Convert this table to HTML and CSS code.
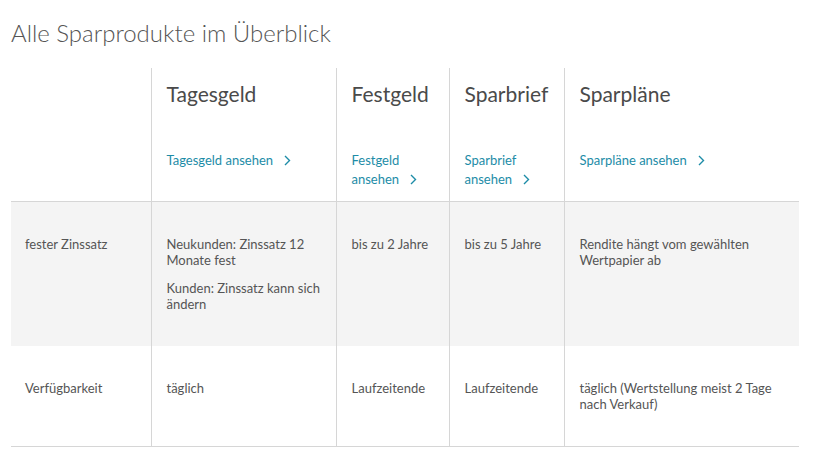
FILE: index.html
```html
<!DOCTYPE html>
<html lang="de">
<head>
<meta charset="utf-8">
<title>Alle Sparprodukte im Überblick</title>
<link rel="stylesheet" href="styles.css">
</head>
<body>
<main class="page">
  <h1 class="title">Alle Sparprodukte im Überblick</h1>
  <table class="compare">
    <colgroup>
      <col class="c-label">
      <col class="c-tages">
      <col class="c-fest">
      <col class="c-brief">
      <col class="c-plan">
    </colgroup>
    <thead>
      <tr class="head-row">
        <th class="label-cell"></th>
        <th class="prod">
          <div class="prod-name">Tagesgeld</div>
          <a class="prod-link" href="#">Tagesgeld ansehen<span class="chev"><svg width="7" height="11" viewBox="0 0 7 11"><path d="M1 1l4.5 4.5L1 10" fill="none" stroke="currentColor" stroke-width="1.4"/></svg></span></a>
        </th>
        <th class="prod">
          <div class="prod-name">Festgeld</div>
          <a class="prod-link" href="#">Festgeld ansehen<span class="chev"><svg width="7" height="11" viewBox="0 0 7 11"><path d="M1 1l4.5 4.5L1 10" fill="none" stroke="currentColor" stroke-width="1.4"/></svg></span></a>
        </th>
        <th class="prod">
          <div class="prod-name">Sparbrief</div>
          <a class="prod-link" href="#">Sparbrief ansehen<span class="chev"><svg width="7" height="11" viewBox="0 0 7 11"><path d="M1 1l4.5 4.5L1 10" fill="none" stroke="currentColor" stroke-width="1.4"/></svg></span></a>
        </th>
        <th class="prod">
          <div class="prod-name">Sparpläne</div>
          <a class="prod-link" href="#">Sparpläne ansehen<span class="chev"><svg width="7" height="11" viewBox="0 0 7 11"><path d="M1 1l4.5 4.5L1 10" fill="none" stroke="currentColor" stroke-width="1.4"/></svg></span></a>
        </th>
      </tr>
    </thead>
    <tbody>
      <tr class="row shaded">
        <td class="label-cell">fester Zinssatz</td>
        <td><p>Neukunden: Zinssatz 12 Monate fest</p><p>Kunden: Zinssatz kann sich ändern</p></td>
        <td><p>bis zu 2 Jahre</p></td>
        <td><p>bis zu 5 Jahre</p></td>
        <td><p>Rendite hängt vom gewählten Wertpapier ab</p></td>
      </tr>
      <tr class="row">
        <td class="label-cell">Verfügbarkeit</td>
        <td><p>täglich</p></td>
        <td><p>Laufzeitende</p></td>
        <td><p>Laufzeitende</p></td>
        <td><p>täglich (Wertstellung meist 2 Tage nach Verkauf)</p></td>
      </tr>
    </tbody>
  </table>
</main>
</body>
</html>
```

FILE: styles.css
```css
* { box-sizing: border-box; }
html, body { margin: 0; padding: 0; background: #fff; }
body {
  font-family: Lato, "Open Sans", "Liberation Sans", sans-serif;
  color: #4a4a4a;
}
.page { padding: 17px 41px 0 11px; }
.title {
  margin: 0;
  font-size: 24px;
  line-height: 32px;
  font-weight: 300;
  color: #555;
}
.compare {
  margin-top: 19px;
  width: 788px;
  table-layout: fixed;
  border-collapse: collapse;
}
.c-label { width: 140px; }
.c-tages { width: 185px; }
.c-fest { width: 113px; }
.c-brief { width: 115px; }
.c-plan { width: 235px; }

.compare th, .compare td {
  text-align: left;
  vertical-align: top;
  padding: 0 15px;
  border-left: 1px solid #d6d6d6;
}
.compare .label-cell { border-left: none; padding-left: 14px; }
.head-row th { height: 133px; padding-top: 14px; font-weight: 400; border-bottom: 1px solid #d6d6d6; }
.prod-name {
  font-size: 21px;
  line-height: 24px;
  color: #4a4a4a;
}
.prod-link {
  display: block;
  margin-top: 45px;
  font-size: 13px;
  line-height: 19px;
  color: #1d8ca7;
  text-decoration: none;
}
.chev { display: inline-block; margin-left: 11px; vertical-align: -1px; }
.chev svg { display: block; }

.row td { padding-top: 34px; padding-bottom: 34px; font-size: 13px; line-height: 16px; color: #555; }
.row td p { margin: 0; }
.row td p + p { margin-top: 12px; }
.shaded td { background: #f4f4f4; }
.row:last-child td { border-bottom: 1px solid #d6d6d6; }
```
